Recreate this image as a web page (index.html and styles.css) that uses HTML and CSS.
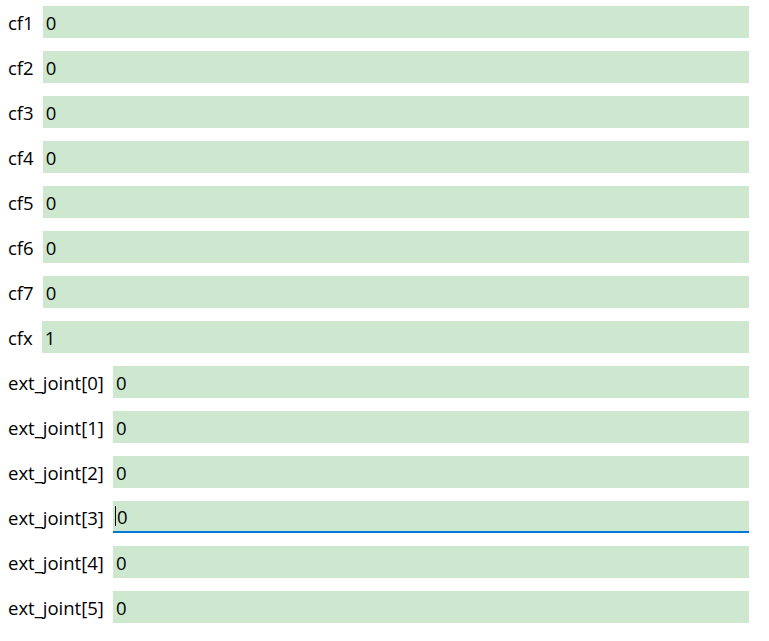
FILE: index.html
```html
<!DOCTYPE html>
<html lang="en">
  <head>
    <meta charset="UTF-8" />
    <meta name="viewport" content="width=device-width, initial-scale=1.0"/>
    <title>Params</title>
    <link rel="stylesheet" href="styles.css">
  </head>
  <body>
    <div class="form">
      <div class="row"><span class="label">cf1</span><div class="field">0</div></div>
      <div class="row"><span class="label">cf2</span><div class="field">0</div></div>
      <div class="row"><span class="label">cf3</span><div class="field">0</div></div>
      <div class="row"><span class="label">cf4</span><div class="field">0</div></div>
      <div class="row"><span class="label">cf5</span><div class="field">0</div></div>
      <div class="row"><span class="label">cf6</span><div class="field">0</div></div>
      <div class="row"><span class="label">cf7</span><div class="field">0</div></div>
      <div class="row"><span class="label">cfx</span><div class="field">1</div></div>
      <div class="row"><span class="label">ext_joint[0]</span><div class="field">0</div></div>
      <div class="row"><span class="label">ext_joint[1]</span><div class="field">0</div></div>
      <div class="row"><span class="label">ext_joint[2]</span><div class="field">0</div></div>
      <div class="row"><span class="label">ext_joint[3]</span><div class="field focused"><span class="caret"></span>0</div></div>
      <div class="row"><span class="label">ext_joint[4]</span><div class="field">0</div></div>
      <div class="row"><span class="label">ext_joint[5]</span><div class="field">0</div></div>
    </div>
  </body>
</html>
```

FILE: styles.css
```css
body {
  margin: 0;
  font-family: "Open Sans", "Noto Sans", sans-serif;
  font-size: 18.5px;
  color: #000;
  background: #fff;
}

.form {
  padding: 6px 20px 0 8px;
}

.row {
  display: flex;
  align-items: center;
  height: 32px;
  margin-bottom: 13px;
}

.label {
  margin-right: 9px;
  white-space: nowrap;
}

.field {
  flex: 1;
  height: 32px;
  background: #cde8cf;
  padding-left: 3px;
  box-sizing: border-box;
  display: flex;
  align-items: center;
}

.field.focused {
  border-bottom: 2px solid #0078d7;
  padding-left: 2px;
}

.caret {
  width: 1px;
  height: 20px;
  background: #000;
  margin-right: 1px;
}
```
